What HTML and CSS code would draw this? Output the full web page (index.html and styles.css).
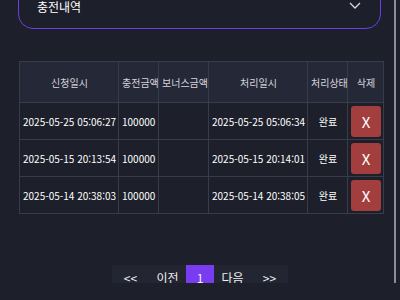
FILE: index.html
```html
<!DOCTYPE html>
<html lang="ko">
<head>
    <meta charset="UTF-8">
    <meta name="viewport" content="width=device-width, initial-scale=1.0">
    <title>충전내역</title>
    <link rel="stylesheet" href="styles.css">
</head>
<body>
    <div class="page">
        <div class="select-box">
            <span>충전내역</span>
            <svg class="chevron" width="12" height="7" viewBox="0 0 12 7">
                <path d="M1 1 L6 6 L11 1" fill="none" stroke="#d8d8e0" stroke-width="1.3"/>
            </svg>
        </div>

        <table class="history">
            <colgroup>
                <col style="width:99px">
                <col style="width:40px">
                <col style="width:50px">
                <col style="width:99px">
                <col style="width:40px">
                <col style="width:36px">
            </colgroup>
            <thead>
                <tr>
                    <th>신청일시</th>
                    <th>충전금액</th>
                    <th>보너스금액</th>
                    <th>처리일시</th>
                    <th>처리상태</th>
                    <th>삭제</th>
                </tr>
            </thead>
            <tbody>
                <tr>
                    <td>2025-05-25 05:06:27</td>
                    <td>100000</td>
                    <td></td>
                    <td>2025-05-25 05:06:34</td>
                    <td class="center">완료</td>
                    <td class="center"><button class="del-btn">X</button></td>
                </tr>
                <tr>
                    <td>2025-05-15 20:13:54</td>
                    <td>100000</td>
                    <td></td>
                    <td>2025-05-15 20:14:01</td>
                    <td class="center">완료</td>
                    <td class="center"><button class="del-btn">X</button></td>
                </tr>
                <tr>
                    <td>2025-05-14 20:38:03</td>
                    <td>100000</td>
                    <td></td>
                    <td>2025-05-14 20:38:05</td>
                    <td class="center">완료</td>
                    <td class="center"><button class="del-btn">X</button></td>
                </tr>
            </tbody>
        </table>

        <div class="pagination">
            <a class="page-link">&lt;&lt;</a>
            <a class="page-link">이전</a>
            <a class="page-link active">1</a>
            <a class="page-link">다음</a>
            <a class="page-link">&gt;&gt;</a>
        </div>
    </div>
</body>
</html>
```

FILE: styles.css
```css
body {
    margin: 0;
    background-color: #1d1f2a;
    font-family: "Noto Sans CJK KR", "Noto Sans", sans-serif;
    color: #f2f2f2;
    overflow: hidden;
}

.page {
    width: 396px;
    height: 300px;
    border-right: 2px solid #8b8d97;
    box-sizing: border-box;
    padding: 0 13px 0 18px;
}

.select-box {
    display: flex;
    align-items: center;
    justify-content: space-between;
    height: 46px;
    margin-top: -17px;
    padding: 0 19px 0 18px;
    border: 1.5px solid #6b3fe6;
    border-radius: 15px;
    box-sizing: border-box;
    font-size: 12px;
    color: #ffffff;
}

.chevron {
    margin-top: -2px;
}

.history {
    margin: 32px 0 0 1px;
    border-collapse: collapse;
    table-layout: fixed;
    width: 364px;
    font-size: 10px;
}

.history th,
.history td {
    border: 1px solid #383b4a;
    padding: 0 2px 0 3px;
    white-space: nowrap;
    text-align: left;
}

.history th {
    height: 40px;
    background-color: #252836;
    color: #d4d4dc;
    font-weight: normal;
    text-align: center;
}

.history td {
    height: 36px;
    background-color: #1d1f2a;
    color: #ffffff;
}

.history td.center {
    text-align: center;
}

.del-btn {
    width: 30px;
    height: 31px;
    border: none;
    border-radius: 3px;
    background-color: #a33e3e;
    color: #ffffff;
    font-family: "Noto Sans CJK KR", "Noto Sans", sans-serif;
    font-size: 15px;
    padding: 0;
    vertical-align: middle;
}

.pagination {
    display: flex;
    width: 176px;
    margin: 51px auto 0 94px;
    background-color: #232532;
    border-radius: 2px;
}

.page-link {
    flex: 1;
    height: 25px;
    line-height: 25px;
    text-align: center;
    font-size: 12px;
    color: #f0f0f0;
}

.page-link.active {
    flex: 0 0 28px;
    background-color: #7a3cf0;
    color: #f0f0ff;
}
```
